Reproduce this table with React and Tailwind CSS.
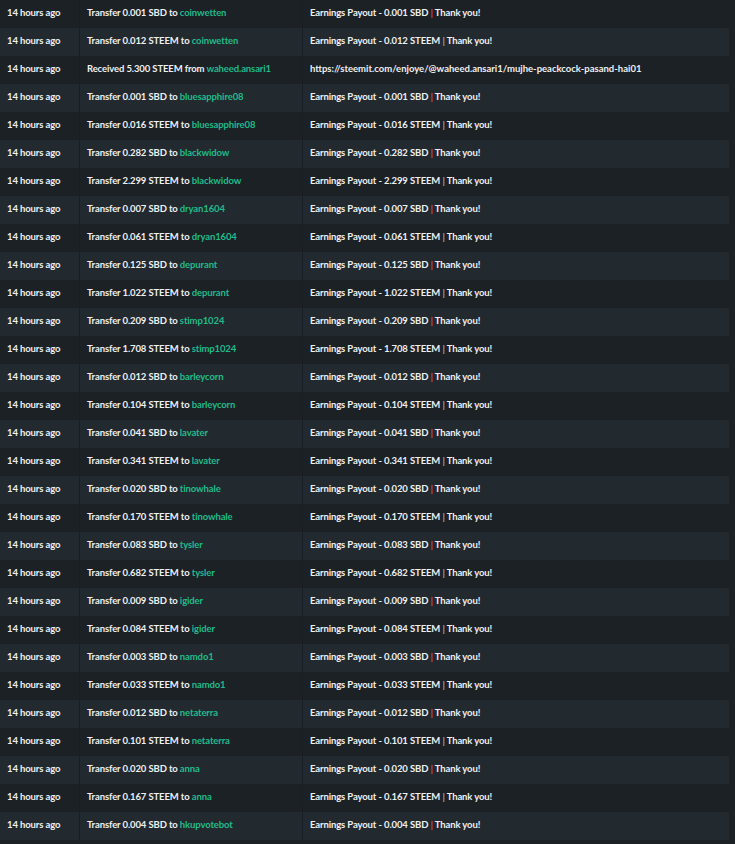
import React from 'react';

const PAYOUT_URL = 'https://steemit.com/enjoye/@waheed.ansari1/mujhe-peackcock-pasand-hai01';

// amount, currency, account
const transfers = [
  ['0.001', 'SBD', 'coinwetten'],
  ['0.012', 'STEEM', 'coinwetten'],
  null,
  ['0.001', 'SBD', 'bluesapphire08'],
  ['0.016', 'STEEM', 'bluesapphire08'],
  ['0.282', 'SBD', 'blackwidow'],
  ['2.299', 'STEEM', 'blackwidow'],
  ['0.007', 'SBD', 'dryan1604'],
  ['0.061', 'STEEM', 'dryan1604'],
  ['0.125', 'SBD', 'depurant'],
  ['1.022', 'STEEM', 'depurant'],
  ['0.209', 'SBD', 'stimp1024'],
  ['1.708', 'STEEM', 'stimp1024'],
  ['0.012', 'SBD', 'barleycorn'],
  ['0.104', 'STEEM', 'barleycorn'],
  ['0.041', 'SBD', 'lavater'],
  ['0.341', 'STEEM', 'lavater'],
  ['0.020', 'SBD', 'tinowhale'],
  ['0.170', 'STEEM', 'tinowhale'],
  ['0.083', 'SBD', 'tysler'],
  ['0.682', 'STEEM', 'tysler'],
  ['0.009', 'SBD', 'igider'],
  ['0.084', 'STEEM', 'igider'],
  ['0.003', 'SBD', 'namdo1'],
  ['0.033', 'STEEM', 'namdo1'],
  ['0.012', 'SBD', 'netaterra'],
  ['0.101', 'STEEM', 'netaterra'],
  ['0.020', 'SBD', 'anna'],
  ['0.167', 'STEEM', 'anna'],
  ['0.004', 'SBD', 'hkupvotebot'],
];

const Row = ({ item, index }) => {
  const striped = index % 2 === 1;
  return (
    <div className={`flex h-[28px] ${striped ? 'bg-[#232a2f]' : 'bg-[#1c2126]'}`}>
      <div className="w-[80px] flex items-center pl-[7px] pb-[1px] border-r border-[#1a1e22]">
        14 hours ago
      </div>
      <div className="w-[223px] flex items-center pl-[7px] pb-[1px] border-r border-[#1a1e22] whitespace-nowrap">
        {item ? (
          <span>
            Transfer {item[0]} {item[1]} to <span className="text-[#1fbb8a]">{item[2]}</span>
          </span>
        ) : (
          <span>
            Received 5.300 STEEM from <span className="text-[#1fbb8a]">waheed.ansari1</span>
          </span>
        )}
      </div>
      <div className="flex-1 flex items-center pl-[7px] pb-[1px] whitespace-nowrap">
        {item ? (
          <span>
            Earnings Payout - {item[0]} {item[1]}{' '}
            <span className={item[1] === 'SBD' ? 'text-[#d24a4a]' : 'text-[#9ba6ae]'}>|</span> Thank you!
          </span>
        ) : (
          <span className="tracking-[0px]">{PAYOUT_URL}</span>
        )}
      </div>
    </div>
  );
};

export default function App() {
  return (
    <div
      className="min-h-screen w-[735px] bg-[#1c2125] text-[#eef0f2] text-[9.5px] font-bold tracking-[-0.12px]"
      style={{ fontFamily: 'Lato, "Open Sans", sans-serif' }}
    >
      <div className="w-[729px]">
        {transfers.map((item, i) => (
          <Row key={i} item={item} index={i} />
        ))}
      </div>
    </div>
  );
}
